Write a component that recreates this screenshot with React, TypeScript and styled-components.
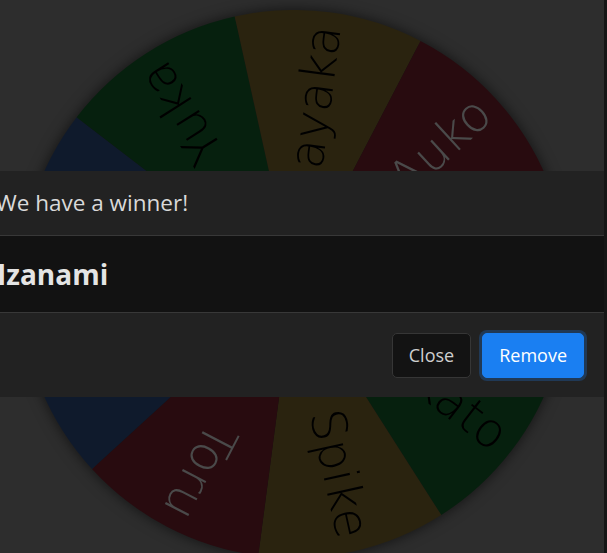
import React from "react";
import styled, { createGlobalStyle } from "styled-components";

const GlobalStyle = createGlobalStyle`
  html, body {
    margin: 0;
    padding: 0;
    background: #969696;
    overflow: hidden;
  }
  body {
    font-family: "Open Sans", "Noto Sans", sans-serif;
  }
`;

const Page = styled.main`
  display: flex;
  align-items: flex-start;
  width: 100vw;
  height: 100vh;
  padding: 10px 0 0 20px;
  box-sizing: border-box;
`;

const WheelSvg = styled.svg`
  flex: none;
  width: 548px;
  height: 548px;
  filter: drop-shadow(0 0 7px rgba(0, 0, 0, 0.6));
  overflow: visible;
`;

const SliceLabel = styled.text<{ $light: boolean }>`
  font-family: "DejaVu Sans", "Lato", sans-serif;
  font-weight: 200;
  font-size: 48px;
  fill: ${(p) => (p.$light ? "#f7f7f7" : "#000000")};
`;

const Backdrop = styled.div`
  position: fixed;
  inset: 0;
  background: rgba(0, 0, 0, 0.7);
`;

const ScrollTrack = styled.div`
  position: fixed;
  top: 0;
  right: 0;
  width: 3px;
  height: 100%;
  background: #161616;
  z-index: 20;
`;

const Modal = styled.section`
  position: fixed;
  top: 171px;
  left: -20px;
  width: 624px;
  display: flex;
  flex-direction: column;
  background: #222222;
  color: #dcdcdc;
  z-index: 10;
`;

const ModalHeader = styled.header`
  display: flex;
  align-items: center;
  padding: 18px 16px;
  border-bottom: 1px solid #383838;
`;

const ModalTitle = styled.h5`
  margin: 0;
  font-size: 22.5px;
  font-weight: 400;
  line-height: 28px;
  color: #d9d9d9;
`;

const ModalBody = styled.div`
  background: #121212;
  padding: 19px 16px 19px 17px;
  border-bottom: 1px solid #383838;
`;

const Winner = styled.h2`
  margin: 0;
  font-size: 28px;
  font-weight: 700;
  line-height: 38px;
  color: #e4e4e4;
`;

const ModalFooter = styled.footer`
  display: flex;
  justify-content: flex-end;
  align-items: center;
  gap: 11px;
  height: 84px;
  padding: 0 20px;
  box-sizing: border-box;
`;

const Button = styled.button<{ $primary?: boolean }>`
  font-family: "Open Sans", "Noto Sans", sans-serif;
  font-size: 18px;
  line-height: 27px;
  height: 45px;
  padding: 0 16px;
  border-radius: 5px;
  cursor: pointer;
  border: 1px solid ${(p) => (p.$primary ? "#1a7ff2" : "#363636")};
  background: ${(p) => (p.$primary ? "#1a7ff2" : "#131313")};
  color: ${(p) => (p.$primary ? "#ffffff" : "#cfcfcf")};
  box-shadow: ${(p) => (p.$primary ? "0 0 0 3px rgba(26, 127, 242, 0.25)" : "none")};
`;

type Slice = { name: string; color: string; light: boolean };

const COLORS = {
  blue: "#355793",
  green: "#176b2f",
  yellow: "#8c7535",
  red: "#852532",
};

const slices: Slice[] = [
  { name: "Haruka", color: COLORS.blue, light: false },
  { name: "Yuka", color: COLORS.green, light: false },
  { name: "Sayaka", color: COLORS.yellow, light: false },
  { name: "Auko", color: COLORS.red, light: true },
  { name: "Izanami", color: COLORS.blue, light: false },
  { name: "Kato", color: COLORS.green, light: false },
  { name: "Spike", color: COLORS.yellow, light: false },
  { name: "Toru", color: COLORS.red, light: true },
  { name: "Mina", color: COLORS.blue, light: false },
];

const R = 274;
const START = -182.5;

function Wheel() {
  const step = 360 / slices.length;
  const rad = (d: number) => (d * Math.PI) / 180;
  return (
    <WheelSvg viewBox="0 0 548 548">
      <g transform={`translate(${R} ${R})`}>
        {slices.map((s, i) => {
          const a0 = rad(START + step * i);
          const a1 = rad(START + step * (i + 1));
          const d = `M0 0 L${R * Math.cos(a0)} ${R * Math.sin(a0)} A${R} ${R} 0 0 1 ${R * Math.cos(a1)} ${R * Math.sin(a1)} Z`;
          return <path key={s.name} d={d} fill={s.color} />;
        })}
        {slices.map((s, i) => {
          const mid = START + step * i + step / 2;
          return (
            <SliceLabel
              key={s.name + "-t"}
              $light={s.light}
              transform={`rotate(${mid})`}
              x={260}
              y={0}
              textAnchor="end"
              dominantBaseline="middle"
            >
              {s.name}
            </SliceLabel>
          );
        })}
      </g>
    </WheelSvg>
  );
}

export default function App() {
  return (
    <>
      <GlobalStyle />
      <Page>
        <Wheel />
      </Page>
      <Backdrop />
      <Modal role="dialog" aria-modal="true">
        <ModalHeader>
          <ModalTitle>We have a winner!</ModalTitle>
        </ModalHeader>
        <ModalBody>
          <Winner>Izanami</Winner>
        </ModalBody>
        <ModalFooter>
          <Button>Close</Button>
          <Button $primary>Remove</Button>
        </ModalFooter>
      </Modal>
      <ScrollTrack />
    </>
  );
}
